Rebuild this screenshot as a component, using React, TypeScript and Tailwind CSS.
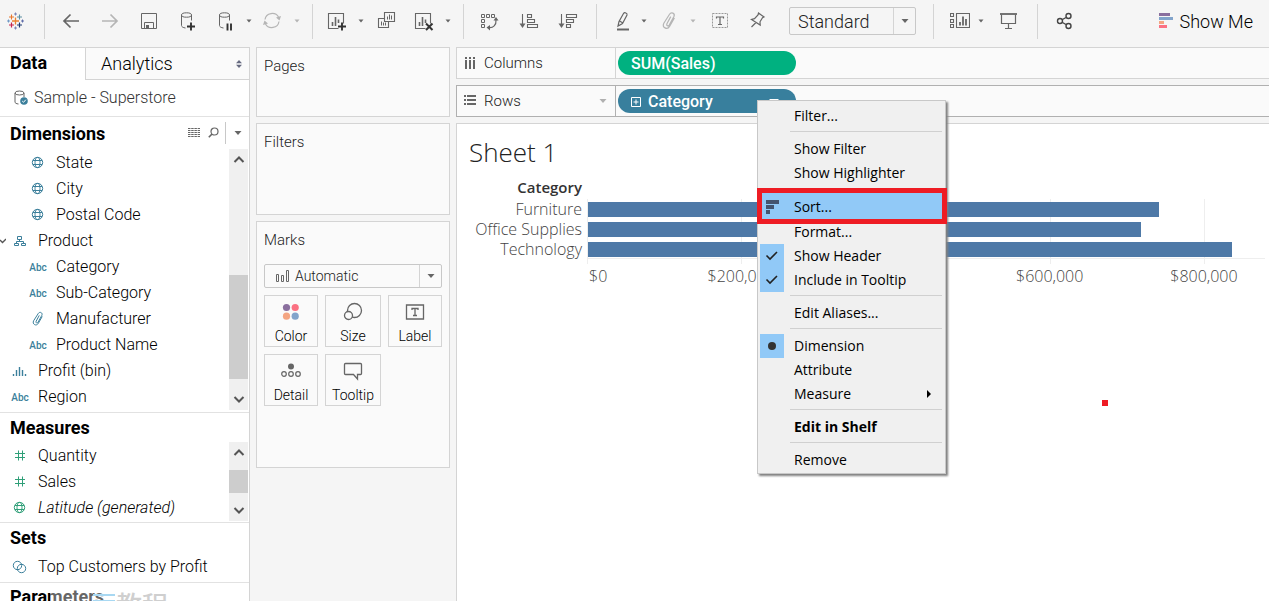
import { useState } from "react";
import type { ReactNode } from "react";

type FieldType = "globe" | "abc" | "clip" | "bin" | "hierarchy" | "number" | "geo" | "set";

type Field = {
  name: string;
  type: FieldType;
  nested?: boolean;
  italic?: boolean;
  open?: boolean;
};

const dimensions: Field[] = [
  { name: "State", type: "globe", nested: true },
  { name: "City", type: "globe", nested: true },
  { name: "Postal Code", type: "globe", nested: true },
  { name: "Product", type: "hierarchy", open: true },
  { name: "Category", type: "abc", nested: true },
  { name: "Sub-Category", type: "abc", nested: true },
  { name: "Manufacturer", type: "clip", nested: true },
  { name: "Product Name", type: "abc", nested: true },
  { name: "Profit (bin)", type: "bin" },
  { name: "Region", type: "abc" },
];

const measures: Field[] = [
  { name: "Quantity", type: "number" },
  { name: "Sales", type: "number" },
  { name: "Latitude (generated)", type: "geo", italic: true },
];

const sales = [
  { category: "Furniture", value: 742000 },
  { category: "Office Supplies", value: 719047 },
  { category: "Technology", value: 836154 },
];
const AXIS_MAX = 879200;
const gridLines = [0, 200000, 400000, 600000, 800000];
const axisLabels = [0, 200000, 600000, 800000];

/* ---------- icons ---------- */

function Icon({ children, className = "text-[#666]" }: { children: ReactNode; className?: string }) {
  return (
    <svg
      className={`h-5 w-5 shrink-0 ${className}`}
      viewBox="0 0 20 20"
      fill="none"
      stroke="currentColor"
      strokeWidth="1"
      aria-hidden="true"
    >
      {children}
    </svg>
  );
}

function Caret({ className = "text-[#666]" }: { className?: string }) {
  return (
    <svg className={`h-3 w-3 shrink-0 ${className}`} viewBox="0 0 12 12" fill="currentColor" aria-hidden="true">
      <path d="M3.500 4.500h5L6 7.500z" />
    </svg>
  );
}

function BigCaret({ className = "text-[#666]" }: { className?: string }) {
  return (
    <svg className={`h-3 w-3 shrink-0 ${className}`} viewBox="0 0 12 12" fill="currentColor" aria-hidden="true">
      <path d="M2.500 4h7L6 8z" />
    </svg>
  );
}

function Logo() {
  return (
    <svg className="ml-[5px] h-5 w-5 shrink-0" viewBox="0 0 20 20" fill="none" role="img" aria-label="Tableau">
      <path d="M10.500 6.500v7M7 10h7" stroke="#eb8130" strokeWidth="1.300" />
      <path d="M6.500 3.500v5M4 6h5" stroke="#e8762c" strokeWidth="1.100" />
      <path d="M14.500 3.500v5M12 6h5" stroke="#5c8fa3" strokeWidth="1.100" />
      <path d="M6.500 11.500v5M4 14h5" stroke="#c8234e" strokeWidth="1.200" />
      <path d="M14.500 11.500v5M12 14h5" stroke="#1f3a72" strokeWidth="1.200" />
      <path d="M10.500 1.500v3M9 3h3M10.500 15.500v3M9 17h3" stroke="#7d86b8" />
      <path d="M3.500 8.500v3M2 10h3" stroke="#7199c6" />
      <path d="M17.500 8.500v3M16 10h3" stroke="#5f6caa" />
    </svg>
  );
}

const cylinder = (
  <>
    <ellipse cx="8.500" cy="4" rx="5" ry="2.200" />
    <path d="M3.500 4v10.500c0 1.200 1.500 2.200 4 2.500M13.500 4v5.500" />
  </>
);

const sheetBars = (
  <>
    <path d="M11.500 17.500h-10v-15h15v10" strokeWidth="1.100" />
    <path d="M5.500 15v-4M8.500 15V6M11.500 12V8.500" strokeWidth="1.600" />
  </>
);

function PaperClip() {
  return (
    <path
      d="M12.500 6 9 12.500c-.8 1.700 1.200 2.700 2.100 1.200l4.300-7.800c1.300-2.800-2.400-4.700-4-2L6.200 12c-1.900 3.800 3.100 6.500 5.200 2.900l4.400-7.700"
      strokeWidth="1.100"
    />
  );
}

function FieldIcon({ type }: { type: FieldType }) {
  if (type === "abc") {
    return <span className="text-[10px] font-medium text-[#3b7f9b]">Abc</span>;
  }
  if (type === "globe" || type === "geo") {
    return (
      <Icon className={type === "geo" ? "text-[#2f9f78]" : "text-[#3b7f9b]"}>
        <circle cx="9.500" cy="9.500" r="5.200" />
        <ellipse cx="9.500" cy="9.500" rx="2.500" ry="5" />
        <path d="M5 7.500h9M5 11.500h9" />
      </Icon>
    );
  }
  if (type === "clip") {
    return (
      <Icon className="text-[#3b7f9b]">
        <g transform="translate(0 1) scale(.9)">
          <PaperClip />
        </g>
      </Icon>
    );
  }
  if (type === "bin") {
    return (
      <Icon className="text-[#3b7f9b]">
        <path d="M3.500 13v2M6.500 9v6M9.500 6v9M12.500 9v6M15.500 13v2" strokeWidth="1.400" />
      </Icon>
    );
  }
  if (type === "hierarchy") {
    return (
      <Icon className="text-[#3b7f9b]">
        <path d="M7.500 5.500h4v3h-4zM4.500 12.500h4v2h-4zM11.500 12.500h4v2h-4zM9.500 8.500v2M6.500 12.500v-2h7v2" />
      </Icon>
    );
  }
  if (type === "set") {
    return (
      <Icon className="text-[#3b7f9b]">
        <circle cx="7.500" cy="8.500" r="4.200" />
        <circle cx="11.500" cy="11.500" r="4.200" />
      </Icon>
    );
  }
  return (
    <Icon className="text-[#2f9f78]">
      <path d="M8.500 4.500v10M12.500 4.500v10M5 7.500h10M5 11.500h10" />
    </Icon>
  );
}

/* ---------- toolbar ---------- */

function Tool({ label, className, children }: { label: string; className: string; children: ReactNode }) {
  return (
    <button type="button" aria-label={label} className={`shrink-0 ${className}`}>
      {children}
    </button>
  );
}

function Separator({ className }: { className: string }) {
  return <div className={`h-[35px] w-px shrink-0 bg-[#d4d4d4] ${className}`} />;
}

function Toolbar() {
  return (
    <header className="flex h-[47px] shrink-0 items-center bg-[#f5f5f5] pb-[5px]">
      <Logo />
      <Separator className="ml-[19px]" />
      <Tool label="Undo" className="ml-4">
        <Icon>
          <path d="M18 10H3M9.500 3.500 3 10l6.500 6.500" strokeWidth="1.700" />
        </Icon>
      </Tool>
      <Tool label="Redo" className="ml-[19px]">
        <Icon className="text-[#b5b5b5]">
          <path d="M2 10h15M10.500 3.500 17 10l-6.500 6.500" strokeWidth="1.700" />
        </Icon>
      </Tool>
      <Tool label="Save" className="ml-[19px]">
        <Icon>
          <path d="M2.500 2.500h15v15h-15zM5.500 17.500v-6h9v6" />
          <path d="M7 14h3v3.500H7z" fill="currentColor" stroke="none" />
        </Icon>
      </Tool>
      <Tool label="New data source" className="ml-[19px]">
        <Icon>
          {cylinder}
          <path d="M13 11.500v8M9 15.500h8" stroke="#333" strokeWidth="1.900" />
        </Icon>
      </Tool>
      <Tool label="Pause auto updates" className="ml-[18px]">
        <Icon>
          {cylinder}
          <path d="M11.500 12.500v7M15 12.500v7" stroke="#333" strokeWidth="1.900" />
        </Icon>
      </Tool>
      <Tool label="Auto update options" className="ml-[7px]">
        <Caret />
      </Tool>
      <Tool label="Run update" className="ml-[7px]">
        <Icon className="text-[#b5b5b5]">
          <path d="M3 8.500c1-7 10.500-8 13.500-2.500M17 10.500c-1 7-10.500 8-13.500 2.500" strokeWidth="1.200" />
          <path d="M19 5 17.500 9.500 14 6.500zM1 14 2.500 9.500 6 12.500z" fill="currentColor" stroke="none" />
        </Icon>
      </Tool>
      <Tool label="Update options" className="ml-[9px]">
        <Caret className="text-[#b5b5b5]" />
      </Tool>
      <Separator className="ml-[9px]" />
      <Tool label="New worksheet" className="ml-3.5">
        <Icon>
          {sheetBars}
          <path d="M15 11.500v8M11 15.500h8" stroke="#333" strokeWidth="1.900" />
        </Icon>
      </Tool>
      <Tool label="New worksheet options" className="ml-2">
        <Caret />
      </Tool>
      <Tool label="Duplicate" className="ml-[9px]">
        <Icon>
          <path d="M8.500 1.500h10v9h-10zM8.500 7.500h-6v9h10v-6" strokeWidth="1.100" />
          <path d="M11.500 8.500v-3M13.500 8.500v-5M15.500 8.500v-4M5.500 14.500v-4M7.500 14.500v-3M9.500 14.500v-3" />
        </Icon>
      </Tool>
      <Tool label="Clear sheet" className="ml-[18px]">
        <Icon>
          {sheetBars}
          <path d="m12 12.500 6.500 6.500M18.500 12.500 12 19" stroke="#333" strokeWidth="2" />
        </Icon>
      </Tool>
      <Tool label="Clear sheet options" className="ml-2">
        <Caret />
      </Tool>
      <Separator className="ml-[9px]" />
      <Tool label="Swap rows and columns" className="ml-4">
        <Icon>
          <path d="M1.500 3.500h3v3h-3zM6.500 3.500h3v3h-3zM11.500 3.500h3v3h-3zM1.500 8.500h3v3h-3zM1.500 13.500h3v3h-3z" />
          <path d="M16 9c.5 5-3 8-7 7.500" strokeWidth="1.200" />
          <path d="M13.500 9.500 16 6l2.500 3.500zM10 14 6.500 16.500l3.500 3z" fill="currentColor" stroke="none" />
        </Icon>
      </Tool>
      <Tool label="Sort ascending" className="ml-[19px]">
        <Icon>
          <path d="M3.500 3v11M8.500 3.500h4v3h-4zM8.500 8.500h7v3h-7zM8.500 13.500h10v3h-10z" strokeWidth="1.100" />
          <path d="M.5 12.500h6L3.500 17z" fill="currentColor" stroke="none" />
        </Icon>
      </Tool>
      <Tool label="Sort descending" className="ml-[19px]">
        <Icon>
          <path d="M3.500 3v11M8.500 3.500h10v3h-10zM8.500 8.500h7v3h-7zM8.500 13.500h4v3h-4z" strokeWidth="1.100" />
          <path d="M.5 12.500h6L3.500 17z" fill="currentColor" stroke="none" />
        </Icon>
      </Tool>
      <Separator className="ml-[18px]" />
      <Tool label="Highlight" className="ml-4">
        <Icon>
          <path d="m6 10.500 4.500-8c1-1.500 4-.5 3.500 1.500l-4.500 8.500L5 15zM6.500 10l3.500 2" strokeWidth="1.200" />
          <path d="M4 18.500h12" strokeWidth="2" />
        </Icon>
      </Tool>
      <Tool label="Highlight options" className="ml-[5px]">
        <Caret />
      </Tool>
      <Tool label="Group members" className="ml-[9px]">
        <Icon className="text-[#b5b5b5]">
          <g transform="translate(-2 -1) scale(1.100)">
            <PaperClip />
          </g>
        </Icon>
      </Tool>
      <Tool label="Group options" className="ml-2">
        <Caret className="text-[#b5b5b5]" />
      </Tool>
      <Tool label="Show mark labels" className="ml-[11px]">
        <Icon>
          <path d="M2.500 2.500h15v14h-15z" stroke="#999" strokeDasharray="2 1" />
          <path d="M6.500 7.500V6h7v1.500M10 6v7.500M8 13.500h4" strokeWidth="1.200" />
        </Icon>
      </Tool>
      <Tool label="Fix axes" className="ml-[17px]">
        <Icon>
          <path d="m11.500 2 5.500 4-1.500.8-2.500 4 .2 3.200L4.500 8.500l3-.8L11 4zM9 11.500 4.500 16" strokeWidth="1.200" />
        </Icon>
      </Tool>
      <div className="relative ml-[22px] h-7 w-[127px] shrink-0">
        <select
          aria-label="Fit"
          className="h-full w-full appearance-none rounded-xs border border-[#c8c8c8] bg-[#f5f5f5] pl-2 text-[18px] font-light text-[#222]"
        >
          <option>Standard</option>
          <option>Fit Width</option>
          <option>Fit Height</option>
          <option>Entire View</option>
        </select>
        <span className="pointer-events-none absolute inset-y-px right-px flex w-[22px] items-center justify-center border-l border-[#d4d4d4]">
          <BigCaret />
        </span>
      </div>
      <Separator className="ml-[17px]" />
      <Tool label="Show/hide cards" className="ml-4">
        <Icon>
          <path d="M.5 2.500h3v3h-3zM.5 8.500h3v3h-3zM.5 13.500h3v3h-3zM6.500 2.500h13v14h-13z" strokeWidth="1.100" />
          <path d="M10 14.500V11M13 14.500v-9M16 14.500V8" strokeWidth="1.800" />
        </Icon>
      </Tool>
      <Tool label="Card options" className="ml-[5px]">
        <Caret />
      </Tool>
      <Tool label="Presentation mode" className="ml-[11px]">
        <Icon>
          <path d="M2 3h17" strokeWidth="1.800" />
          <path d="M3.500 3.500v9h14v-9M10.500 12.500V17M7 17.500h7" strokeWidth="1.200" />
        </Icon>
      </Tool>
      <Separator className="ml-[19px]" />
      <Tool label="Share" className="ml-[17px]">
        <Icon className="text-[#444]">
          <circle cx="5" cy="10" r="2.500" strokeWidth="1.400" />
          <circle cx="13.500" cy="5" r="2.500" strokeWidth="1.400" />
          <circle cx="13.500" cy="15" r="2.500" strokeWidth="1.400" />
          <path d="m7.500 8.500 3.500-2M7.500 11.500l3.500 2" strokeWidth="1.400" />
        </Icon>
      </Tool>
      <button
        type="button"
        className="mr-4 ml-auto flex shrink-0 items-center gap-1.5 text-[18px] font-light text-black"
      >
        <svg className="h-4 w-[15px]" viewBox="0 0 15 16" aria-hidden="true">
          <path d="M0 0h11v3H0z" fill="#8a6f9e" />
          <path d="M0 4h14v3H0z" fill="#82a4cb" />
          <path d="M0 8h5v3H0z" fill="#f4a582" />
          <path d="M0 12h8v3H0z" fill="#fb7182" />
        </svg>
        Show Me
      </button>
    </header>
  );
}

/* ---------- data pane ---------- */

function Chevron({ up = false }: { up?: boolean }) {
  return (
    <svg
      className={`h-[22px] w-3 shrink-0 ${up ? "rotate-180" : ""}`}
      viewBox="0 0 12 22"
      fill="none"
      stroke="#555"
      strokeWidth="2"
      aria-hidden="true"
    >
      <path d="m1.500 9 4.500 4.500L10.500 9" />
    </svg>
  );
}

function Scrollbar({ before, thumb, after }: { before: number; thumb: number; after: number }) {
  return (
    <div className="mr-px flex w-[19px] shrink-0 flex-col items-center bg-[#f0f0f0]">
      <Chevron up />
      <div className="flex w-full flex-1 flex-col">
        <div style={{ flexGrow: before }} />
        <div className="w-full bg-[#cdcdcd]" style={{ flexGrow: thumb }} />
        <div style={{ flexGrow: after }} />
      </div>
      <Chevron />
    </div>
  );
}

function FieldRow({ field }: { field: Field }) {
  return (
    <li className={`relative flex h-[26px] items-center ${field.nested ? "pl-[27px]" : "pl-[9px]"}`}>
      {field.open && (
        <svg className="absolute left-0 h-2 w-1.5" viewBox="0 0 6 8" fill="none" stroke="#555" aria-hidden="true">
          <path d="m0 3 2.500 2.500L6 2" strokeWidth="1.300" />
        </svg>
      )}
      <span className="flex w-[22px] shrink-0 items-center justify-center">
        <FieldIcon type={field.type} />
      </span>
      <button type="button" className={`ml-[7px] whitespace-nowrap ${field.italic ? "italic" : ""}`}>
        {field.name}
      </button>
    </li>
  );
}

function DataPane() {
  const [tab, setTab] = useState("data");
  return (
    <aside className="relative flex w-[250px] shrink-0 flex-col overflow-hidden border-t border-r border-[#d4d4d4] bg-white text-base font-light text-black">
      <div className="flex h-8 shrink-0" role="tablist">
        <button
          type="button"
          role="tab"
          aria-selected={tab === "data"}
          onClick={() => setTab("data")}
          className="w-[85px] pb-[3px] pl-2.5 text-left text-[18px] font-bold"
        >
          Data
        </button>
        <button
          type="button"
          role="tab"
          aria-selected={tab === "analytics"}
          onClick={() => setTab("analytics")}
          className="flex flex-1 items-center justify-between border-b border-l border-[#d4d4d4] bg-[#fafafa] pr-1.5 pl-[15px] text-[18px]"
        >
          Analytics
          <svg className="h-2 w-2" viewBox="0 0 8 8" fill="#666a80" aria-hidden="true">
            <path d="M1 3.300 4 0l3 3.300zM1 4.700 4 8l3-3.300z" />
          </svg>
        </button>
      </div>
      <button
        type="button"
        className="flex h-[37px] shrink-0 items-center gap-[3px] border-b border-[#e2e2e2] pl-[11px] text-[#333]"
      >
        <Icon>
          <g transform="translate(0 1)">
            <ellipse cx="8.500" cy="4" rx="4.500" ry="2" />
            <path d="M4 4v9c0 1 1.200 1.800 3.500 2M13 4v4" />
          </g>
          <circle cx="13" cy="13" r="3.800" fill="#3b7f9b" stroke="none" />
          <path d="m11.200 13 1.300 1.300 2.300-2.600" stroke="#fff" />
        </Icon>
        Sample - Superstore
      </button>

      <div className="flex h-8 shrink-0 items-center pr-[5px] pl-2.5">
        <h2 className="text-[18px] font-bold">Dimensions</h2>
        <button type="button" aria-label="View data" className="ml-auto">
          <svg className="h-3 w-3" viewBox="0 0 12 12" stroke="#666" aria-hidden="true">
            <path d="M0 1.500h12M0 3.500h12M0 5.500h12M0 7.500h12M0 9.500h12" strokeDasharray="2.500 .7" />
          </svg>
        </button>
        <button type="button" aria-label="Find field" className="ml-[7px]">
          <svg className="h-3 w-3" viewBox="0 0 12 12" fill="none" stroke="#666" aria-hidden="true">
            <circle cx="7.500" cy="4.500" r="3.500" strokeWidth="1.200" />
            <path d="M5 7 1.800 10.300" strokeWidth="1.600" />
          </svg>
        </button>
        <div className="ml-1.5 h-[22px] w-px bg-[#c8c8c8]" />
        <button type="button" aria-label="Pane menu" className="ml-1.5">
          <BigCaret />
        </button>
      </div>
      <div className="flex shrink-0 pb-0.5">
        <ul className="flex-1 pt-px">
          {dimensions.map((f) => (
            <FieldRow key={f.name} field={f} />
          ))}
        </ul>
        <Scrollbar before={104} thumb={104} after={9} />
      </div>

      <h2 className="flex h-[30px] shrink-0 items-center border-t border-[#e2e2e2] pl-2.5 text-[18px] font-bold">
        Measures
      </h2>
      <div className="flex shrink-0 pb-px">
        <ul className="flex-1 pt-px">
          {measures.map((f) => (
            <FieldRow key={f.name} field={f} />
          ))}
        </ul>
        <Scrollbar before={6} thumb={22} after={6} />
      </div>

      <h2 className="flex h-[30px] shrink-0 items-center border-t border-[#e2e2e2] pl-2.5 text-[18px] font-bold">
        Sets
      </h2>
      <ul className="shrink-0 py-0.5">
        <FieldRow field={{ name: "Top Customers by Profit", type: "set" }} />
      </ul>

      <h2 className="relative flex h-7 shrink-0 items-center border-t border-[#e2e2e2] pl-2.5 text-[18px] font-bold">
        Parameters
        <span className="absolute top-0 left-[50px] flex h-full w-[150px] bg-white/40 pt-[11px] pl-[43px]">
          <span className="mr-px h-2 w-[22px] border-y-2 border-[#a8d8f2]" />
          <span
            lang="zh"
            className="font-['Noto_Sans_CJK_SC',sans-serif] text-[26px] leading-[20px] font-medium whitespace-nowrap text-[#cfcfcf]"
          >
            教程
          </span>
        </span>
      </h2>
    </aside>
  );
}

/* ---------- cards ---------- */

function MarkButton({ label, children }: { label: string; children: ReactNode }) {
  return (
    <button
      type="button"
      className="flex h-[52px] flex-col items-center justify-between border border-[#d4d4d4] pt-1.5 text-sm leading-5 text-black"
    >
      {children}
      {label}
    </button>
  );
}

function Cards() {
  return (
    <section className="ml-1.5 flex w-[194px] shrink-0 flex-col gap-1.5 text-[15px] font-light text-[#222]">
      <div className="h-[70px] border border-[#d4d4d4] bg-[#fafafa] px-[7px] pt-[7px]">Pages</div>
      <div className="h-[92px] border border-[#d4d4d4] bg-[#fafafa] px-[7px] pt-[7px]">Filters</div>
      <div className="h-[247px] border border-[#d4d4d4] bg-[#fafafa] px-[7px] pt-[7px]">
        <h2>Marks</h2>
        <div className="relative mt-3 h-6">
          <select
            aria-label="Mark type"
            className="h-full w-full appearance-none rounded-xs border border-[#c8c8c8] bg-[#fafafa] pl-[30px] text-sm font-light text-[#222]"
          >
            <option>Automatic</option>
            <option>Bar</option>
            <option>Line</option>
          </select>
          <svg
            className="pointer-events-none absolute top-1 left-3 h-4 w-3.5"
            viewBox="0 0 14 16"
            fill="none"
            stroke="#666"
            aria-hidden="true"
          >
            <path d="M.5 6.500h2v7h-2zM5.500 7.500h2v6h-2zM10.500 2.500h2v11h-2z" />
          </svg>
          <span className="pointer-events-none absolute inset-y-px right-px flex w-[22px] items-center justify-center border-l border-[#d4d4d4]">
            <BigCaret />
          </span>
        </div>
        <div className="mt-[7px] grid grid-cols-[54fr_56fr_54fr] gap-[7px]">
          <MarkButton label="Color">
            <Icon>
              <g stroke="none">
                <circle cx="5.500" cy="5.500" r="3.600" fill="#8a6f9e" />
                <circle cx="14.200" cy="5.500" r="3.600" fill="#fb7182" />
                <circle cx="5.500" cy="14.200" r="3.600" fill="#f4a582" />
                <circle cx="14.200" cy="14.200" r="3.600" fill="#82a4cb" />
              </g>
            </Icon>
          </MarkButton>
          <MarkButton label="Size">
            <Icon>
              <circle cx="11.500" cy="8.500" r="7" strokeWidth="1.300" />
              <circle cx="5.500" cy="13.500" r="4" fill="#fafafa" strokeWidth="1.300" />
            </Icon>
          </MarkButton>
          <MarkButton label="Label">
            <Icon>
              <path d="M1.500 3h17v14h-17z" strokeWidth="1.300" />
              <path d="M7 8V6.500h6V8M10 6.500v7M8 13.500h4" strokeWidth="1.300" />
            </Icon>
          </MarkButton>
          <MarkButton label="Detail">
            <Icon>
              <circle cx="10" cy="5.500" r="3" fill="currentColor" stroke="none" />
              <circle cx="3" cy="13" r="2.300" strokeWidth="1.200" />
              <circle cx="10" cy="13" r="2.300" strokeWidth="1.200" />
              <circle cx="17" cy="13" r="2.300" strokeWidth="1.200" />
            </Icon>
          </MarkButton>
          <MarkButton label="Tooltip">
            <Icon>
              <path d="M2.500 2.500h15q1 0 1 1v9q0 1-1 1h-3V18l-4-4.500h-8q-1 0-1-1v-9q0-1 1-1z" strokeWidth="1.300" />
            </Icon>
          </MarkButton>
        </div>
      </div>
    </section>
  );
}

/* ---------- context menu ---------- */

function MenuItem({
  children,
  mark,
  bold = false,
  arrow = false,
}: {
  children: ReactNode;
  mark?: "check" | "dot";
  bold?: boolean;
  arrow?: boolean;
}) {
  return (
    <button
      type="button"
      role={mark === "check" ? "menuitemcheckbox" : mark === "dot" ? "menuitemradio" : "menuitem"}
      aria-checked={mark ? true : undefined}
      className={`flex h-6 w-full items-center whitespace-nowrap ${bold ? "font-bold" : ""}`}
    >
      <span className={`mr-2.5 flex h-6 w-6 items-center justify-center ${mark ? "bg-[#91c9f7]" : ""}`}>
        {mark === "check" && (
          <svg className="h-3 w-3.5" viewBox="0 0 14 12" fill="none" stroke="#222" strokeWidth="1.600" aria-hidden="true">
            <path d="m1.500 5.500 3.500 3.500 7-7" />
          </svg>
        )}
        {mark === "dot" && <span className="h-2 w-2 rounded-full bg-[#333]" />}
      </span>
      {children}
      {arrow && (
        <svg className="mr-[11px] ml-auto h-2 w-1" viewBox="0 0 4 8" aria-hidden="true">
          <path d="m0 0 4 4-4 4z" />
        </svg>
      )}
    </button>
  );
}

function MenuDivider() {
  return <div className="mt-[3px] mb-[5px] ml-[30px] h-px bg-[#d0d0d0]" />;
}

function ContextMenu() {
  return (
    <div
      role="menu"
      className="absolute top-[11px] left-[139px] z-20 w-[189px] border border-[#c8c8c8] bg-[#f0f0f0] pt-[3px] pr-[3px] pb-px pl-0.5 font-['Open_Sans','Noto_Sans',sans-serif] text-sm font-normal text-black shadow-[2px_2px_2px_#808080]"
    >
      <MenuItem>Filter...</MenuItem>
      <MenuDivider />
      <MenuItem>Show Filter</MenuItem>
      <MenuItem>Show Highlighter</MenuItem>
      <MenuDivider />
      <div className="relative h-[26px]">
        <button
          type="button"
          role="menuitem"
          className="absolute -top-1.5 -right-[5px] -bottom-1 -left-[3px] flex items-center border-[5px] border-[#ee1c24] bg-[#91c9f7] pt-px"
        >
          <svg className="ml-1 h-3.5 w-3.5" viewBox="0 0 14 14" fill="#44546f" aria-hidden="true">
            <path d="M0 0h13v4H0zM0 5h8v4H0zM0 10h4v4H0z" />
          </svg>
          <span className="ml-3.5">Sort...</span>
        </button>
      </div>
      <MenuItem>Format...</MenuItem>
      <MenuItem mark="check">Show Header</MenuItem>
      <MenuItem mark="check">Include in Tooltip</MenuItem>
      <MenuDivider />
      <MenuItem>Edit Aliases...</MenuItem>
      <MenuDivider />
      <MenuItem mark="dot">Dimension</MenuItem>
      <MenuItem>Attribute</MenuItem>
      <MenuItem arrow>Measure</MenuItem>
      <MenuDivider />
      <MenuItem bold>Edit in Shelf</MenuItem>
      <MenuDivider />
      <MenuItem>Remove</MenuItem>
    </div>
  );
}

/* ---------- worksheet ---------- */

function Worksheet() {
  return (
    <section className="relative min-h-0 flex-1 border-t border-l border-[#d4d4d4] bg-white pt-3 pr-1 pl-3 font-['Open_Sans','Noto_Sans',sans-serif]">
      <h1 className="text-[26px] leading-8 font-light text-[#222]">Sheet 1</h1>
      <div className="mt-[7px] grid grid-cols-[113px_1fr] gap-x-[5px] text-base font-light text-[#444]">
        <div className="text-right text-[15px] leading-6 font-semibold text-[#333]">Category</div>
        <div />
        <div className="text-right">
          {sales.map((s) => (
            <div key={s.category} className="h-5 leading-5 whitespace-nowrap">
              {s.category}
            </div>
          ))}
        </div>
        <div className="relative h-[60px] border-b border-[#eee]">
          {gridLines.map((t) => (
            <div
              key={t}
              className={`absolute top-0 -bottom-1.5 w-px bg-[#eee] ${t === 0 ? "z-10" : ""}`}
              style={{ left: `${(t / AXIS_MAX) * 100}%` }}
            />
          ))}
          {sales.map((s) => (
            <div key={s.category} className="relative flex h-5 items-center">
              <div className="h-[15px] bg-[#4e79a7]" style={{ width: `${(s.value / AXIS_MAX) * 100}%` }} />
            </div>
          ))}
        </div>
        <div />
        <div className="relative h-8">
          {axisLabels.map((t) => (
            <span
              key={t}
              className={`absolute top-[7px] leading-5 ${t === 0 ? "ml-0.5" : "-translate-x-1/2"}`}
              style={{ left: `${(t / AXIS_MAX) * 100}%` }}
            >
              ${t.toLocaleString("en-US")}
            </span>
          ))}
        </div>
      </div>
      <span className="absolute top-[276px] left-[645px] h-1.5 w-1.5 bg-[#ee1c24]" />
    </section>
  );
}

function App() {
  return (
    <div className="flex h-screen flex-col overflow-hidden bg-[#f5f5f5] font-['Roboto','Noto_Sans',sans-serif]">
      <Toolbar />
      <main className="flex min-h-0 flex-1">
        <DataPane />
        <Cards />
        <div className="ml-1.5 flex min-w-0 flex-1 flex-col gap-1.5 text-[15px] font-light text-[#222]">
          <div className="flex h-8 shrink-0 border-y border-l border-[#d4d4d4] bg-[#fafafa]">
            <div className="flex w-[159px] items-center border-r border-[#d4d4d4] pl-[7px]">
              <svg className="mr-2 h-3 w-3" viewBox="0 0 12 12" fill="#666" aria-hidden="true">
                <path d="M1 0h2v2H1zM5 0h2v2H5zM9 0h2v2H9zM1 3h2v9H1zM5 3h2v9H5zM9 3h2v9H9z" />
              </svg>
              Columns
            </div>
            <button
              type="button"
              className="my-[3px] ml-0.5 h-6 w-[178px] rounded-full bg-[#00b180] pt-px pl-[13px] text-left text-base leading-5 font-medium text-white"
            >
              SUM(Sales)
            </button>
          </div>
          <div className="flex h-8 shrink-0 border-y border-l border-[#b0b0b0] bg-[#fafafa]">
            <div className="flex w-[159px] items-center border-r border-[#b0b0b0] pr-1.5 pl-[7px]">
              <svg className="mr-2 h-3 w-3" viewBox="0 0 12 12" fill="#666" aria-hidden="true">
                <path d="M0 0h2v2H0zM0 4h2v2H0zM0 8h2v2H0zM3 0h9v2H3zM3 4h9v2H3zM3 8h9v2H3z" />
              </svg>
              Rows
              <button type="button" aria-label="Rows menu" className="ml-auto">
                <BigCaret className="text-[#b0b0b0]" />
              </button>
            </div>
            <div className="relative my-[3px] ml-0.5 h-6 w-[178px]">
              <button
                type="button"
                className="flex h-full w-full items-center rounded-full bg-[#387f9d] pt-px pr-4 pl-[13px] text-base font-medium text-white"
              >
                <svg className="mr-[7px] h-2.5 w-2.5" viewBox="0 0 10 10" fill="none" stroke="#fff" aria-hidden="true">
                  <path d="M.5.5h9v9h-9zM5 2.500v5M2.500 5h5" />
                </svg>
                Category
                <svg className="ml-auto h-3 w-3" viewBox="0 0 12 12" fill="#fff" aria-hidden="true">
                  <path d="M1 3h10L6 8z" />
                </svg>
              </button>
              <ContextMenu />
            </div>
          </div>
          <Worksheet />
        </div>
      </main>
    </div>
  );
}

export default App;
